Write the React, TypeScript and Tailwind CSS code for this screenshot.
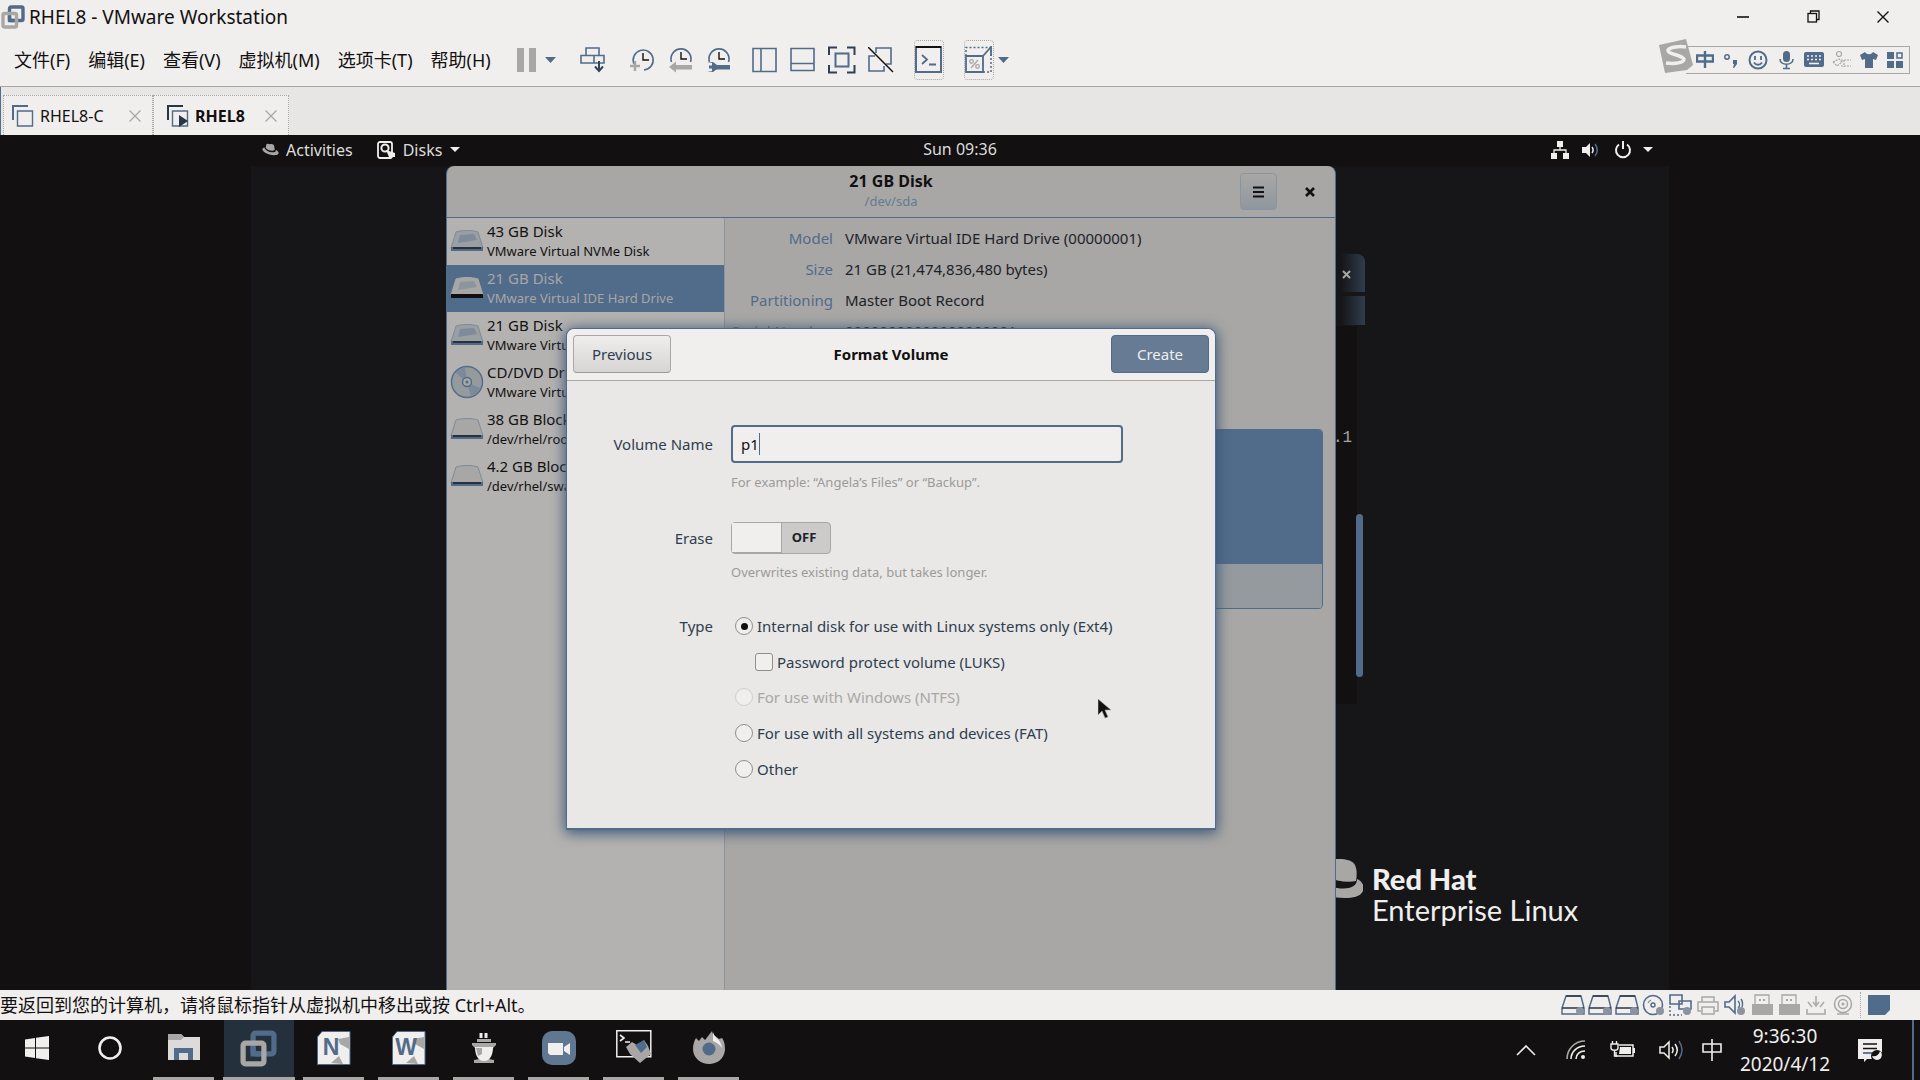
import { useState } from "react";
import type { ReactNode } from "react";

const BLUE = "#516b8a";
const GREY = "#a8a7a5";
const INK = "#121011";
const PAPER = "#f0efed";

function Svg({ w, h, children, className = "" }: { w: number; h: number; children: ReactNode; className?: string }) {
  return (
    <svg width={w} height={h} viewBox={`0 0 ${w} ${h}`} fill="none" className={`shrink-0 ${className}`} aria-hidden="true">
      {children}
    </svg>
  );
}

/* ---------- VMware title bar, menu and tool bar ---------- */

function VmLogo({ size }: { size: number }) {
  return (
    <svg width={size} height={size} viewBox="0 0 24 24" fill="none" className="shrink-0" aria-hidden="true">
      <rect x="8.5" y="2" width="13.5" height="13.5" rx="1.5" stroke={BLUE} strokeWidth="3.4" />
      <rect x="2" y="8.5" width="13.5" height="13.5" rx="1.5" stroke={GREY} strokeWidth="3.4" />
      <path d="M8.5 11v4.5H13" stroke={BLUE} strokeWidth="3.4" />
    </svg>
  );
}

function TitleBar() {
  return (
    <header className="flex h-[33px] items-center justify-between pl-px text-[19px] leading-6">
      <div className="flex items-center gap-1">
        <VmLogo size={24} />
        <h1>RHEL8 - VMware Workstation</h1>
      </div>
      <div className="flex pr-[2px]">
        <button aria-label="Minimize" className="grid h-8 w-[70px] place-items-center">
          <Svg w={12} h={12}><path d="M0 6h12" stroke={INK} strokeWidth="1.600" /></Svg>
        </button>
        <button aria-label="Restore" className="grid h-8 w-[70px] place-items-center">
          <Svg w={13} h={13}>
            <path d="M3.500 3V1h8.500v8.500H10" stroke={INK} strokeWidth="1.300" />
            <rect x="1" y="3.500" width="8.500" height="8.500" stroke={INK} strokeWidth="1.300" />
          </Svg>
        </button>
        <button aria-label="Close" className="grid h-8 w-[70px] place-items-center">
          <Svg w={12} h={12}><path d="M.5.5l11 11M11.500.5l-11 11" stroke={INK} strokeWidth="1.400" /></Svg>
        </button>
      </div>
    </header>
  );
}

const menus = ["文件(F)", "编辑(E)", "查看(V)", "虚拟机(M)", "选项卡(T)", "帮助(H)"];

function Caret() {
  return <Svg w={11} h={6}><path d="M0 0h11L5.500 6z" fill={BLUE} /></Svg>;
}

function Clock({ children }: { children: ReactNode }) {
  return (
    <Svg w={26} h={26}>
      <path d="M4 17A10 10 0 1 1 14 23" stroke={BLUE} strokeWidth="1.600" />
      <path d="M13 6v7h6" stroke={INK} strokeWidth="1.400" />
      {children}
    </Svg>
  );
}

function HalfClock({ children }: { children: ReactNode }) {
  return (
    <Svg w={26} h={26}>
      <path d="M3.500 15A10 10 0 1 1 22.500 15" stroke={BLUE} strokeWidth="1.600" />
      <path d="M13 5v7h6" stroke={INK} strokeWidth="1.400" />
      {children}
    </Svg>
  );
}

function Tool({ name, children }: { name: string; children: ReactNode }) {
  return <button aria-label={name} className="flex items-center">{children}</button>;
}

function ToolBar() {
  return (
    <div className="flex items-center">
      <Tool name="Suspend">
        <Svg w={20} h={24}><path d="M0 0h7v24H0zM12 0h7v24h-7z" fill={GREY} /></Svg>
      </Tool>
      <button aria-label="Power options" className="ml-2 flex"><Caret /></button>
      <div className="ml-6 flex">
        <Tool name="Send Ctrl+Alt+Del">
          <Svg w={26} h={26}>
            <path d="M6 8V1h13v7M1 8.500h23V16H1zM14 9v7" stroke={BLUE} strokeWidth="1.600" />
            <path d="M19 14v10M15 19.500l4 4.500 4-4.500" stroke="#33445a" strokeWidth="2" />
          </Svg>
        </Tool>
      </div>
      <div className="ml-6 flex gap-3">
        <Tool name="Take snapshot">
          <Clock><path d="M0 19h10M5 14v10" stroke={GREY} strokeWidth="2.500" /></Clock>
        </Tool>
        <Tool name="Revert snapshot">
          <HalfClock><path d="M1 20l7-5.500v3.500h16v4.500H8V25.500z" fill={GREY} /></HalfClock>
        </Tool>
        <Tool name="Manage snapshots">
          <HalfClock>
            <path d="M9 18h15v4.500H9z" fill={BLUE} />
            <path d="M1 16h5v2.500H3v3h3V24H1l6 1 4-3v-4l-4-3z" fill={BLUE} />
          </HalfClock>
        </Tool>
      </div>
      <div className="ml-5 flex gap-3">
        <Tool name="Show library">
          <Svg w={26} h={26}><path d="M1 1.500h23v23H1zM9 1.500v23" stroke={BLUE} strokeWidth="1.600" /></Svg>
        </Tool>
        <Tool name="Show thumbnails">
          <Svg w={26} h={26}><path d="M1 1.500h23v22H1zM1 16.500h23" stroke={BLUE} strokeWidth="1.600" /></Svg>
        </Tool>
        <Tool name="Full screen">
          <Svg w={28} h={28}>
            <path d="M1 9V1.500h8M19 1.500h7.500V9M26.500 19v7.500H19M9 26.500H1V19" stroke="#2f3f54" strokeWidth="2" />
            <path d="M7.500 7.500h13v13h-13z" stroke={BLUE} strokeWidth="2" />
          </Svg>
        </Tool>
        <Tool name="Unity">
          <Svg w={26} h={26}>
            <path d="M8 6V1h15v16h-5M7 9H1v15h15v-5" stroke={BLUE} strokeWidth="1.600" />
            <path d="M0 0l25 25" stroke={INK} strokeWidth="1.500" />
          </Svg>
        </Tool>
      </div>
      <button aria-label="Console view" className="ml-5 grid h-10 w-[30px] place-items-center rounded-sm border border-dotted border-[#a8a7a5]">
        <Svg w={27} h={27}>
          <path d="M1 1h25v25H1z" stroke={BLUE} strokeWidth="2" />
          <path d="M1 1h25" stroke={INK} strokeWidth="2" />
          <path d="M7 9l5 4.500L7 18M14 18.500h7" stroke={BLUE} strokeWidth="1.800" />
        </Svg>
      </button>
      <button aria-label="Stretch guest" className="ml-5 grid h-10 w-[30px] place-items-center rounded-sm border border-dotted border-[#a8a7a5]">
        <Svg w={27} h={27}>
          <path d="M1 10V1.500h25V26H18" stroke={BLUE} strokeWidth="1.500" strokeDasharray="2 2" />
          <path d="M1 10h17v16H1zM18 10l8-9v9" stroke={BLUE} strokeWidth="1.800" />
          <path d="M6 22l7-8" stroke={GREY} strokeWidth="1.400" />
          <circle cx="6.500" cy="15.500" r="1.800" stroke={GREY} strokeWidth="1.300" />
          <circle cx="12.500" cy="20.500" r="1.800" stroke={GREY} strokeWidth="1.300" />
        </Svg>
      </button>
      <button aria-label="Stretch options" className="ml-1 flex"><Caret /></button>
    </div>
  );
}

function ImeBar() {
  return (
    <div className="flex items-center pr-[10px]">
      <Svg w={36} h={34} className="z-10 mb-2">
        <path d="M1 6L28 0l7 26-6 5-22 3z" fill={GREY} />
        <path d="M28 8c-7-1-16 0-18 3-1 4 14 5 16 9 0 4-9 5-18 4" stroke={PAPER} strokeWidth="3.500" />
      </Svg>
      <div className="-ml-2 flex h-7 items-center gap-2 border border-l-0 border-[#a8a7a5] pr-[5px] pl-[10px]">
        <Svg w={18} h={18}><path d="M1 4.500h16v6H1zM9 0v17" stroke={BLUE} strokeWidth="2.400" /></Svg>
        <Svg w={18} h={18}>
          <circle cx="5" cy="6" r="2.200" stroke={BLUE} strokeWidth="1.500" />
          <path d="M11 9h4v4l-3 4h-1l1-4h-1z" fill={BLUE} />
        </Svg>
        <Svg w={20} h={20}>
          <circle cx="10" cy="10" r="8.500" stroke={BLUE} strokeWidth="2" />
          <path d="M7 6v4M13 6v4M6 12.500c2 3 6 3 8 0" stroke={BLUE} strokeWidth="1.800" />
        </Svg>
        <Svg w={20} h={20}>
          <rect x="7" y="1" width="7" height="11" rx="3.500" fill={BLUE} />
          <path d="M4 9c0 7 13 7 13 0M10.500 14v5M7 18.500h7" stroke={BLUE} strokeWidth="1.600" />
        </Svg>
        <Svg w={20} h={18}>
          <rect x="0" y="1" width="20" height="15" rx="2" fill={BLUE} />
          <path d="M3 5h14M3 8.500h14" stroke={PAPER} strokeWidth="1.600" strokeDasharray="2 2" />
          <path d="M5 12.500h10" stroke={PAPER} strokeWidth="1.600" />
        </Svg>
        <Svg w={20} h={20}>
          <g stroke={GREY} strokeWidth="1.200">
            <circle cx="7" cy="4" r="2.500" />
            <path d="M1 12l6-3 3 3-5 4zM9 10h10M9 16h10M12 10v7" strokeDasharray="2 1" />
          </g>
        </Svg>
        <Svg w={18} h={18}><path d="M0 4l5-3c2 3 6 3 8 0l5 3-2 5-3-1v9H5V8L2 9z" fill={BLUE} /></Svg>
        <Svg w={18} h={18}>
          <path d="M1 1h7v7H1zM1 10h7v7H1zM10 10h7v7h-7z" fill={BLUE} />
          <path d="M11 2h5v5h-5z" stroke={BLUE} strokeWidth="1.500" />
        </Svg>
      </div>
    </div>
  );
}

function MenuRow() {
  return (
    <div className="flex h-[54px] items-center justify-between border-b border-[#a8a7a5]">
      <div className="flex items-center pl-[14px]">
        <nav className="flex gap-[18px] pr-[26px] text-[18px] leading-6">
          {menus.map((m) => (
            <button key={m} className="whitespace-nowrap">{m}</button>
          ))}
        </nav>
        <ToolBar />
      </div>
      <ImeBar />
    </div>
  );
}

function VmTab({ name, active }: { name: string; active?: boolean }) {
  return (
    <div
      role="tab"
      aria-selected={!!active}
      className={`flex h-10 items-center border border-b-0 border-dotted border-[#a8a7a5] bg-[#f0efed] pr-[11px] text-[16px] leading-6 ${active ? "w-[136px] pl-[13px] font-bold" : "w-[150px] pl-2"}`}
    >
      <Svg w={22} h={22}>
        <path d="M1 15V1h15" stroke={active ? "#2a3646" : BLUE} strokeWidth="2" />
        <path d="M5.500 6h15v15h-15z" stroke={BLUE} strokeWidth="1.400" />
        {active && <path d="M12 10l9 6-9 6z" fill="#2a3646" />}
      </Svg>
      <span className="ml-[6px] flex-1 whitespace-nowrap">{name}</span>
      <button aria-label={`Close ${name}`}>
        <Svg w={12} h={12}><path d="M.5.5l11 11M11.500.5l-11 11" stroke={GREY} strokeWidth="1.300" /></Svg>
      </button>
    </div>
  );
}

/* ---------- Guest desktop ---------- */

function Fedora({ w, h }: { w: number; h: number }) {
  return (
    <svg width={w} height={h} viewBox="0 0 32 24" className="shrink-0" aria-hidden="true">
      <path d="M8 3c1-3 4-2 7-1 4-1 7 0 8 4l1 7c-5 3-14 0-17-4z" fill={GREY} />
      <path d="M5 8c-6 1-6 5 1 10 8 5 20 6 24 3 3-3 0-6-4-8 1 5-7 5-13 3C8 14 4 11 5 8z" fill={GREY} />
    </svg>
  );
}

function GuestBar() {
  return (
    <div className="relative flex h-[31px] items-center justify-between pr-4 pb-[2px] pl-[11px] text-[16px] leading-6 text-[#dddcda]">
      <div className="flex items-center">
        <button className="flex items-center gap-[7px]">
          <Fedora w={17} h={13} />
          Activities
        </button>
        <button className="ml-6 flex items-center gap-2">
          <Svg w={18} h={18}>
            <rect x="1" y="1" width="14" height="16" rx="2" stroke={PAPER} strokeWidth="1.800" />
            <circle cx="8" cy="7" r="3.600" stroke={PAPER} strokeWidth="2" />
            <path d="M9 9l3 7h6v-4z" fill={PAPER} />
          </Svg>
          Disks
          <Svg w={10} h={5}><path d="M0 0h10L5 5z" fill={PAPER} /></Svg>
        </button>
      </div>
      <time className="absolute top-[2px] left-1/2 -translate-x-1/2 whitespace-nowrap">Sun 09:36</time>
      <div className="flex items-center">
        <Svg w={18} h={18}>
          <path d="M6 0h6v6H6zM0 12h6v6H0zM12 12h6v6h-6z" fill={PAPER} />
          <path d="M9 6v3M3 12V9h12v3" stroke={PAPER} strokeWidth="1.300" />
        </Svg>
        <Svg w={17} h={16} className="ml-[13px]">
          <path d="M0 5h4l4-4v14l-4-4H0z" fill={PAPER} />
          <path d="M10 5c1.500 2 1.500 4 0 6" stroke={PAPER} strokeWidth="1.500" />
          <path d="M13 2c3 4 3 8 0 12" stroke={BLUE} strokeWidth="1.500" />
        </Svg>
        <Svg w={18} h={18} className="ml-[15px]">
          <path d="M5 3.500a7 7 0 1 0 8 0M9 0v8" stroke={PAPER} strokeWidth="2" />
        </Svg>
        <Svg w={10} h={5} className="ml-[11px]"><path d="M0 0h10L5 5z" fill={PAPER} /></Svg>
      </div>
    </div>
  );
}

function DriveIcon({ kind, light }: { kind: "drive" | "disc" | "block"; light?: boolean }) {
  if (kind === "disc") {
    return (
      <Svg w={34} h={34}>
        <circle cx="17" cy="17" r="15.500" fill="#959a9d" stroke={BLUE} strokeWidth="1.400" />
        <path d="M17 17L6 8a15 15 0 0 1 9-6zM17 17l13 6a15 15 0 0 1-9 8z" fill="#7a8a9b" />
        <circle cx="17" cy="17" r="4.500" fill={GREY} stroke={BLUE} strokeWidth="1.400" />
        <circle cx="17" cy="17" r="1.500" fill={BLUE} />
      </Svg>
    );
  }
  return (
    <Svg w={34} h={34}>
      <path d="M6 8c6-2 16-2 22 0l5 16H1z" fill={light ? GREY : kind === "drive" ? "#9b9fa2" : "#a8a7a5"} stroke={light ? GREY : "#7d8b9a"} />
      {kind === "drive" && <path d="M10 11l14-1 3 6-19 3z" fill={light ? "#8b959f" : "#7d8b9a"} />}
      <path d="M1 23h32v4H1z" fill={light ? INK : BLUE} />
      <path d="M3 24h28" stroke={INK} strokeWidth="1.300" />
    </Svg>
  );
}

type Drive = { title: string; sub: string; kind: "drive" | "disc" | "block"; selected?: boolean };

const drives: Drive[] = [
  { title: "43 GB Disk", sub: "VMware Virtual NVMe Disk", kind: "drive" },
  { title: "21 GB Disk", sub: "VMware Virtual IDE Hard Drive", kind: "drive", selected: true },
  { title: "21 GB Disk", sub: "VMware Virtual SATA Hard Drive", kind: "drive" },
  { title: "CD/DVD Drive", sub: "VMware Virtual SATA CDRW Drive", kind: "disc" },
  { title: "38 GB Block Device", sub: "/dev/rhel/root", kind: "block" },
  { title: "4.2 GB Block Device", sub: "/dev/rhel/swap", kind: "block" },
];

const facts = [
  ["Model", "VMware Virtual IDE Hard Drive (00000001)"],
  ["Size", "21 GB (21,474,836,480 bytes)"],
  ["Partitioning", "Master Boot Record"],
  ["Serial Number", "00000000000000000001"],
];

function DisksWindow() {
  return (
    <section className="absolute inset-y-0 left-[195px] flex w-[890px] flex-col rounded-t-lg border-x border-[#516b8a] bg-[#a8a7a5]">
      <header className="relative flex h-[52px] items-center justify-end border-b border-[#516b8a]">
        <div className="absolute inset-x-0 top-1 flex flex-col items-center">
          <h2 className="text-[16px] leading-[22px] font-bold">21 GB Disk</h2>
          <p className="text-[13px] leading-[18px] text-[#647b94]">/dev/sda</p>
        </div>
        <button aria-label="Menu" className="z-10 mr-7 grid h-[37px] w-[37px] place-items-center rounded border border-[#8995a1] bg-linear-to-b from-[#a8a7a5] to-[#8f979e]">
          <Svg w={11} h={12}><path d="M0 1.500h11M0 6h11M0 10.500h11" stroke={INK} strokeWidth="2.200" /></Svg>
        </button>
        <button aria-label="Close Disks" className="z-10 mr-5">
          <Svg w={10} h={10}><path d="M1 1l8 8M9 1L1 9" stroke={INK} strokeWidth="2.600" /></Svg>
        </button>
      </header>
      <div className="flex flex-1">
        <ul className="w-[278px] overflow-hidden border-r border-[#8995a1] bg-[#b3b2b0]">
          {drives.map((d, i) => (
            <li
              key={i}
              className={`flex h-[47px] items-center gap-[3px] pb-px pl-[3px] whitespace-nowrap ${d.selected ? "bg-[#516b8a] text-[#a8a7a5]" : ""}`}
            >
              <DriveIcon kind={d.kind} light={d.selected} />
              <div>
                <p className="text-[15px] leading-5">{d.title}</p>
                <p className="text-[13px] leading-5">{d.sub}</p>
              </div>
            </li>
          ))}
        </ul>
        <div className="flex flex-1 flex-col pr-3">
          <dl className="grid grid-cols-[108px_1fr] gap-x-3 pt-[5px] text-[15px] leading-[31px]">
            {facts.map(([k, v]) => (
              <div key={k} className="contents">
                <dt className="text-right whitespace-nowrap text-[#516b8a]">{k}</dt>
                <dd className="text-[#1d2229]">{v}</dd>
              </div>
            ))}
          </dl>
          <div className="mt-[82px] ml-3 overflow-hidden rounded border border-[#516b8a]">
            <div className="h-[134px] bg-[#516b8a]" />
            <div className="h-11 bg-[#959a9e]" />
          </div>
        </div>
      </div>
    </section>
  );
}

const types = [
  { id: "ext4", label: "Internal disk for use with Linux systems only (Ext4)" },
  { id: "ntfs", label: "For use with Windows (NTFS)", disabled: true },
  { id: "fat", label: "For use with all systems and devices (FAT)" },
  { id: "other", label: "Other" },
];

function FormatDialog() {
  const [name, setName] = useState("p1");
  const [erase, setErase] = useState(false);
  const [type, setType] = useState("ext4");
  const [luks, setLuks] = useState(false);

  return (
    <form
      role="dialog"
      aria-label="Format Volume"
      onSubmit={(e) => e.preventDefault()}
      className="absolute top-[162px] left-[315px] w-[650px] rounded-t-lg border border-b-2 border-[#516b8a] bg-[#e9e8e6] text-[15px] leading-6 text-[#2e3d50] shadow-[0_2px_14px_1px_#3a5474]"
    >
      <header className="flex h-[52px] items-center justify-between rounded-t-lg border-b border-[#a8a7a5] bg-[#f0efed] px-[6px] pb-px">
        <button type="button" className="h-[38px] w-[98px] rounded border border-[#a8a7a5] border-b-[#9a9997] bg-linear-to-b from-[#efeeec] to-[#d6d5d3]">
          Previous
        </button>
        <h2 className="font-bold text-[#121011]">Format Volume</h2>
        <button type="submit" className="h-[38px] w-[98px] rounded border border-[#516b8a] bg-[#677b94] text-[#f0efed]">
          Create
        </button>
      </header>
      <div className="grid grid-cols-[146px_1fr] gap-x-[18px] pt-11 pb-[41px]">
        <label htmlFor="volume-name" className="text-right leading-[38px]">Volume Name</label>
        <div>
          <div className="relative w-[392px]">
            <input
              id="volume-name"
              value={name}
              onChange={(e) => setName(e.target.value)}
              className="h-[38px] w-full rounded-sm border-2 border-[#516b8a] bg-[#f0efed] px-2 text-[#121011] outline-none"
            />
            {name === "p1" && <span className="absolute top-2 left-[28px] h-[22px] w-px bg-[#516b8a]" />}
          </div>
          <p className="mt-[7px] text-[13px] text-[#9b9a98]">For example: “Angela’s Files” or “Backup”.</p>
        </div>

        <span id="erase-label" className="mt-7 text-right leading-8">Erase</span>
        <div className="mt-7">
          <button
            type="button"
            role="switch"
            aria-checked={erase}
            aria-labelledby="erase-label"
            onClick={() => setErase(!erase)}
            className="flex h-8 w-[100px] rounded-sm border border-[#a8a7a5] bg-[#cccbc9]"
          >
            <span className="h-full w-[50px] border-r border-b border-[#a8a7a5] bg-[#f0efed]" />
            <span className="flex-1 pr-1 text-[13px] leading-[29px] font-bold text-[#1d2229]">{erase ? "ON" : "OFF"}</span>
          </button>
          <p className="mt-[6px] text-[13px] text-[#9b9a98]">Overwrites existing data, but takes longer.</p>
        </div>

        <span className="mt-6 text-right leading-9">Type</span>
        <div role="radiogroup" aria-label="Type" className="mt-6 pl-1">
          {types.map((t) => (
            <div key={t.id}>
              <label className={`flex h-9 items-center gap-1 ${t.disabled ? "text-[#a8a7a5]" : ""}`}>
                <input
                  type="radio"
                  name="type"
                  disabled={t.disabled}
                  checked={type === t.id}
                  onChange={() => setType(t.id)}
                  className="grid size-[18px] appearance-none place-items-center rounded-full border border-[#8f8e8c] bg-[#f0efed] before:size-[7px] before:rounded-full checked:before:bg-[#121011] disabled:border-[#cfcecc]"
                />
                {t.label}
              </label>
              {t.id === "ext4" && (
                <label className="flex h-[35px] items-center gap-1 pl-5">
                  <input
                    type="checkbox"
                    checked={luks}
                    onChange={() => setLuks(!luks)}
                    className="size-[18px] appearance-none rounded-[3px] border border-[#8f8e8c] bg-[#f0efed] checked:bg-[#516b8a]"
                  />
                  Password protect volume (LUKS)
                </label>
              )}
            </div>
          ))}
        </div>
      </div>
    </form>
  );
}

function Guest() {
  return (
    <main className="flex flex-1 flex-col bg-[#121011]">
      <div className="mx-auto flex w-full max-w-[1418px] flex-1 flex-col">
        <GuestBar />
        <div className="relative flex-1 bg-[#161619]">
          {/* Windows behind Disks: only their right edges stick out */}
          <div className="absolute top-[160px] left-[1084px] h-[378px] w-[22px] bg-[#121011]" />
          <div className="absolute top-[88px] left-[1090px] h-[38px] w-6 rounded-tr-lg bg-linear-to-r from-[#161619] to-[#2f3d4e]" />
          <div className="absolute top-[130px] left-[1090px] h-[29px] w-6 bg-linear-to-r from-[#161619] to-[#2f3d4e]" />
          <Svg w={9} h={9} className="absolute top-[104px] left-[1091px]">
            <path d="M1 1l7 7M8 1L1 8" stroke={GREY} strokeWidth="2" />
          </Svg>
          <span className="absolute top-[260px] left-[1082px] font-['Liberation_Mono'] text-[16px] leading-6 text-[#a8a7a5]">.1</span>
          <div className="absolute top-[348px] left-[1105px] h-[163px] w-[7px] rounded-full bg-[#516b8a]" />

          <svg width="60" height="40" viewBox="0 0 60 40" className="absolute top-[693px] left-[1052px]" aria-hidden="true">
            <path d="M10 2c20-3 38-4 42 4 2 4 2 10 1 16-8 2-20 0-30-4z" fill={GREY} />
            <path d="M54 20c5 2 8 7 6 12-3 6-10 7-18 7-14 0-30-4-40-12l26 1c14 3 26 2 26-8z" fill={GREY} />
          </svg>
          <div className="absolute top-[697px] left-[1121px] font-['Lato'] text-[29px] leading-[31px] whitespace-nowrap text-[#f0efed]">
            <p className="font-black">Red Hat</p>
            <p>Enterprise Linux</p>
          </div>

          <DisksWindow />
          <FormatDialog />

          <Svg w={14} h={20} className="absolute top-[533px] left-[847px]">
            <path d="M0 0v16l4-4 3 7 3-1-3-7h6z" fill={INK} stroke={GREY} strokeWidth=".6" />
          </Svg>
        </div>
      </div>
    </main>
  );
}

/* ---------- Status bar ---------- */

function StatusDrive() {
  return (
    <Svg w={24} h={22}>
      <path d="M5 2h15l3 12v6H1v-6z" stroke={BLUE} strokeWidth="1.500" />
      <path d="M5 2h15M1 14h22" stroke="#2a3646" strokeWidth="1.500" />
      <circle cx="19" cy="17" r="4" fill="#8b949e" />
    </Svg>
  );
}

function Usb() {
  return (
    <Svg w={24} h={22}>
      <path d="M5 11V1h14v10" stroke={GREY} strokeWidth="1.300" />
      <path d="M2 10h21v11H2zM9 5h2v2H9zM13 5h2v2h-2z" fill={GREY} />
    </Svg>
  );
}

function StatusBar() {
  return (
    <footer className="flex h-[30px] items-center justify-between pr-[30px] text-[18px] leading-6">
      <p className="whitespace-nowrap">要返回到您的计算机，请将鼠标指针从虚拟机中移出或按 Ctrl+Alt。</p>
      <div className="flex items-center">
        <div className="flex items-center gap-[3px]">
          <StatusDrive />
          <StatusDrive />
          <StatusDrive />
          <Svg w={24} h={22}>
            <circle cx="11" cy="11" r="9.500" stroke={BLUE} strokeWidth="1.600" />
            <circle cx="11" cy="11" r="2" stroke={BLUE} strokeWidth="1.400" />
            <path d="M6 9a5 5 0 0 1 3-3" stroke={BLUE} />
            <circle cx="18" cy="17" r="4" fill="#8b949e" />
          </Svg>
          <Svg w={24} h={22}>
            <path d="M1 1h12v9H1zM10 7h12v8H10z" fill={PAPER} stroke={BLUE} strokeWidth="1.600" />
            <path d="M1 12v9h12" stroke={BLUE} strokeWidth="1.400" strokeDasharray="2 2" />
            <circle cx="18" cy="17" r="4" fill="#8b949e" />
          </Svg>
          <Svg w={24} h={22}>
            <path d="M6 8V3h12v5M5 17H2V8h20v9h-3M6 13h12v7H6z" stroke={GREY} strokeWidth="1.500" />
          </Svg>
          <Svg w={24} h={22}>
            <path d="M2 8h4l6-6v17l-6-6H2z" stroke={BLUE} strokeWidth="1.600" />
            <path d="M15 7c2 2 2 5 0 7M18 5c2 3 2 5 1 8" stroke={BLUE} strokeWidth="1.400" />
            <circle cx="18" cy="17" r="4" fill="#8b949e" />
          </Svg>
          <Usb />
          <Usb />
          <Svg w={24} h={22}>
            <path d="M12 2v8M9 8l3 4 3-4M4 8l4 5M20 8l-4 5M3 15v5h18v-5" stroke={GREY} strokeWidth="1.500" />
          </Svg>
          <Svg w={24} h={22}>
            <circle cx="12" cy="10" r="8.500" stroke={GREY} strokeWidth="1.500" />
            <circle cx="12" cy="10" r="4.500" stroke={GREY} strokeWidth="1.500" />
            <circle cx="12" cy="10" r="1.500" fill={GREY} />
            <path d="M6 20h12" stroke={GREY} strokeWidth="1.500" />
          </Svg>
        </div>
        <div className="ml-[5px] h-[26px] border-l border-dotted border-[#a8a7a5] pl-[7px]" />
        <Svg w={22} h={22}><path d="M0 1h22v15l-5 5H0z" fill={BLUE} /></Svg>
      </div>
    </footer>
  );
}

/* ---------- Windows task bar ---------- */

function Doc({ letter }: { letter: string }) {
  return (
    <Svg w={34} h={34}>
      <path d="M5 .500h28v33H.500V6z" fill={PAPER} stroke={BLUE} />
      <path d="M21 8l11-2v12l-9-5zM14 32l8-7 4 8z" fill={GREY} />
      <text x="14" y="24" fontSize="23" fontWeight="700" textAnchor="middle" fill={BLUE} fontFamily="Liberation Sans, sans-serif">{letter}</text>
    </Svg>
  );
}

const apps: { name: string; icon: ReactNode; running?: boolean; active?: boolean }[] = [
  {
    name: "Start",
    icon: <Svg w={24} h={24}><path d="M0 3.500l10-1.500v9.500H0zM11 1.800L24 0v11.500H11zM0 12.500h10V22L0 20.500zM11 12.500h13V24l-13-1.800z" fill={PAPER} /></Svg>,
  },
  {
    name: "Cortana",
    icon: <Svg w={24} h={24}><circle cx="12" cy="12" r="10.500" stroke={PAPER} strokeWidth="2.600" /></Svg>,
  },
  {
    name: "File Explorer",
    running: true,
    icon: (
      <Svg w={32} h={28}>
        <path d="M0 0h13l3 3h16v23H0z" fill="#dcdbd9" />
        <path d="M0 0h13l3 3-3 3H0z" fill={GREY} />
        <path d="M6 26V14h19v12h-5v-7h-9v7z" fill={BLUE} />
      </Svg>
    ),
  },
  { name: "VMware Workstation", running: true, active: true, icon: <VmLogo size={37} /> },
  { name: "OneNote", running: true, icon: <Doc letter="N" /> },
  { name: "Word", running: true, icon: <Doc letter="W" /> },
  {
    name: "Assistant",
    running: true,
    icon: (
      <Svg w={24} h={32}>
        <path d="M9 1v5M14 1v5" stroke={PAPER} strokeWidth="3" />
        <path d="M5 7h14v3H5zM0 11h24v2l-3 3H3l-3-3zM2 28l5-1h10l5 1v3H2z" fill={GREY} />
        <path d="M3 15h18c0 8-3 14-9 14S3 23 3 15z" fill={PAPER} />
        <path d="M4 16h6v6l-4 2z" fill={GREY} />
      </Svg>
    ),
  },
  {
    name: "Meeting",
    running: true,
    icon: (
      <Svg w={34} h={34}>
        <rect width="34" height="34" rx="10" fill="#5f7791" />
        <path d="M6 12h15v12H8l-2-2zM22 16l6-4v12l-6-4z" fill={PAPER} />
      </Svg>
    ),
  },
  {
    name: "Remote shell",
    running: true,
    icon: (
      <Svg w={36} h={36}>
        <path d="M.8.800h34v26H.8z" fill={INK} stroke={PAPER} strokeWidth="1.500" />
        <path d="M4 5l4 3-4 3M9 12h5" stroke={PAPER} strokeWidth="1.600" />
        <path d="M10 17l6-5 5 3 7-5 4 6 3 8-11 9-10-9z" fill={GREY} />
        <path d="M19 15l9-5 3 7-6 6z" fill={BLUE} />
      </Svg>
    ),
  },
  {
    name: "Browser",
    running: true,
    icon: (
      <Svg w={32} h={34}>
        <path d="M3 7l3 3 3-4 3 3 7-9c1 5 4 5 7 8l3-1c3 4 3 9 3 12-1 9-8 14-16 14S0 27 0 18c0-4 1-8 3-11z" fill={GREY} />
        <path d="M20 1c1 6 8 7 9 16-3-4-6-6-9-7z" fill={PAPER} />
        <circle cx="16" cy="18" r="6.500" fill={BLUE} />
      </Svg>
    ),
  },
];

function TaskBar() {
  return (
    <nav className="flex h-[60px] items-stretch justify-between bg-[#121011] text-[#f0efed]">
      <div className="flex">
        {apps.map((a) => (
          <button key={a.name} aria-label={a.name} className={`flex flex-col items-center ${a.running ? "w-[75px]" : "w-[73px]"}`}>
            <span className={`grid w-[70px] flex-1 place-items-center pb-px ${a.active ? "bg-[#25303d]" : ""}`}>{a.icon}</span>
            <span className={`h-[3px] ${a.active ? "w-[72px]" : "w-[61px]"} ${a.running ? "bg-[#a8a7a5]" : ""}`} />
          </button>
        ))}
      </div>
      <div className="flex items-center">
        <Svg w={20} h={11}><path d="M1 10l9-9 9 9" stroke={PAPER} strokeWidth="1.600" /></Svg>
        <Svg w={20} h={20} className="ml-[30px]">
          <g stroke={PAPER} strokeWidth="1.600">
            <path d="M1 19C1 9 9 1 19 1" stroke={GREY} />
            <path d="M5 19C5 12 11 6 19 6M10 19c0-5 4-8 9-8" />
          </g>
          <circle cx="17" cy="17" r="2" fill={PAPER} />
        </Svg>
        <Svg w={26} h={18} className="ml-6">
          <path d="M9 4h14v11H6v-4" stroke={PAPER} strokeWidth="1.500" />
          <path d="M10 6h11v7H9zM23 7h2v5h-2z" fill={PAPER} />
          <path d="M1 3h7v4c0 3-7 3-7 0zM2.500 0v3M6.500 0v3M4.500 9v6H7" stroke={PAPER} strokeWidth="1.400" />
        </Svg>
        <Svg w={25} h={22} className="ml-[23px]">
          <path d="M1 8h4l5-5v16l-5-5H1z" stroke={PAPER} strokeWidth="1.500" />
          <path d="M13 8c1.500 2 1.500 4 0 6M16 5c3 4 3 8 0 12" stroke={PAPER} strokeWidth="1.500" />
          <path d="M20 2c4 6 4 12 0 18" stroke={BLUE} strokeWidth="1.500" />
        </Svg>
        <Svg w={20} h={24} className="ml-[18px]"><path d="M1 6h18v8H1zM10 1v22" stroke={PAPER} strokeWidth="1.600" /></Svg>
        <time className="ml-4 w-[94px] text-center text-[19px] leading-7 whitespace-nowrap">
          9:36:30
          <br />
          2020/4/12
        </time>
        <button aria-label="Notifications" className="ml-[26px]">
          <Svg w={26} h={24}>
            <path d="M0 1h24v20H9l-3 3v-3H0z" fill={PAPER} />
            <path d="M5 6h14M5 10.500h14" stroke={INK} strokeWidth="1.600" />
            <path d="M5 15h9" stroke={BLUE} strokeWidth="1.800" />
            <circle cx="19" cy="18" r="6" fill={INK} />
            <path d="M22 13a5 5 0 1 1-8 5c4 1 7-1 8-5z" fill={PAPER} />
          </Svg>
        </button>
        <div className="ml-7 h-full w-2 border-l-2 border-[#516b8a]" />
      </div>
    </nav>
  );
}

export default function App() {
  return (
    <div className="flex min-h-screen flex-col bg-[#f0efed] font-['Noto_Sans','Noto_Sans_CJK_SC',sans-serif] text-[#121011]">
      <TitleBar />
      <MenuRow />
      <div role="tablist" className="flex h-12 items-end border-l border-[#516b8a] bg-[#e7e6e4] pl-[2px]">
        <VmTab name="RHEL8-C" />
        <VmTab name="RHEL8" active />
      </div>
      <Guest />
      <StatusBar />
      <TaskBar />
    </div>
  );
}
